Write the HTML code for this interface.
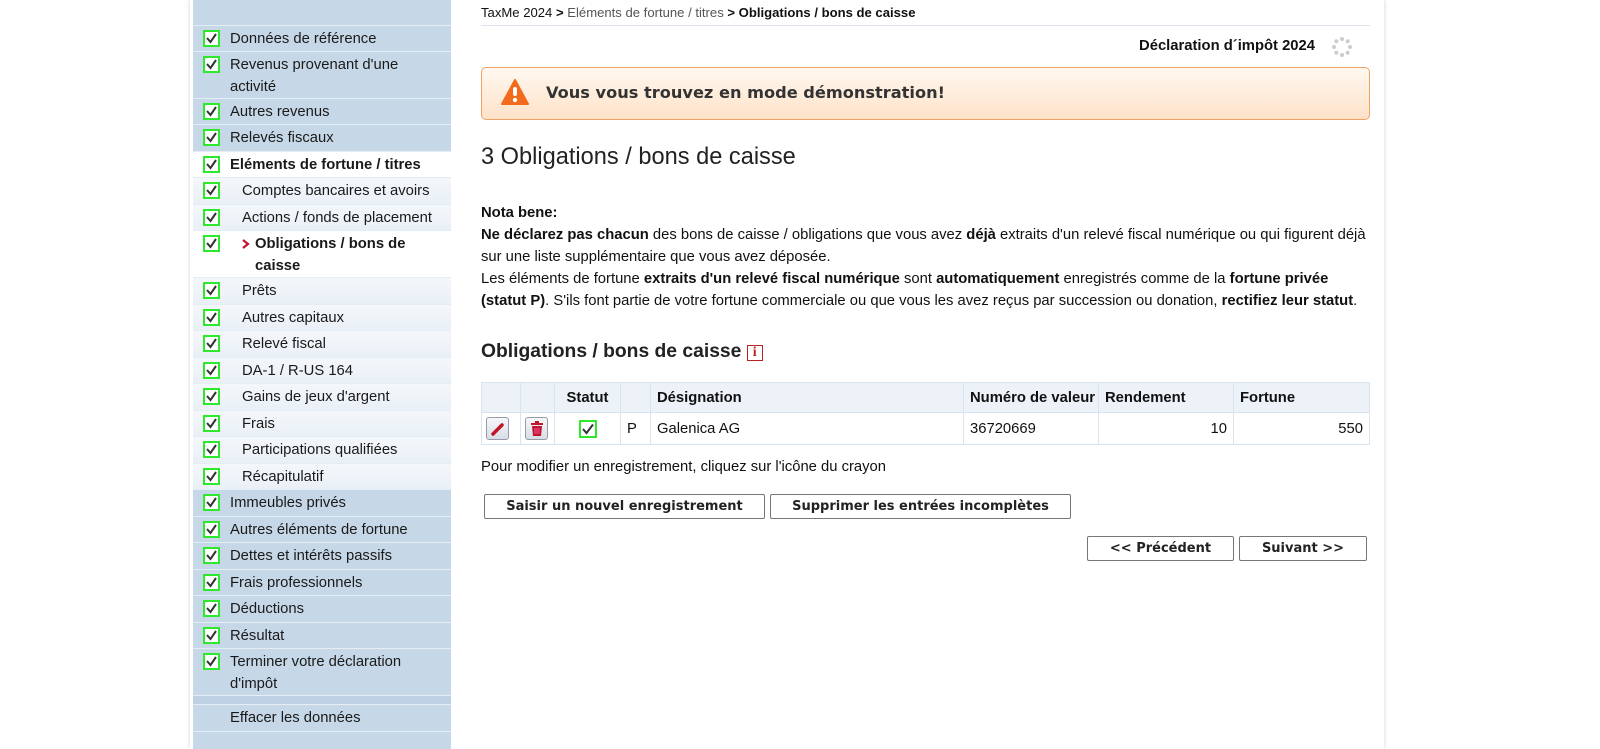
<!DOCTYPE html>
<html><head><meta charset="utf-8">
<style>
*{margin:0;padding:0;box-sizing:border-box}
body{width:1600px;height:749px;overflow:hidden;background:#fff;font-family:"Liberation Sans",Arial,sans-serif;font-size:14.8px;color:#111;position:relative}
.frame{position:absolute;left:190px;top:0;width:1194px;height:749px;box-shadow:0 0 4px rgba(0,0,0,.18);background:#fff}
.sb{position:absolute;left:193px;top:0;width:258px;height:749px;background:#c6d8e8}
.r{position:absolute;left:193px;width:258px;border-bottom:1px solid #e4edf5;background:#c6d8e8;line-height:22px;font-size:14.8px;color:#1a1a1a}
.r.l{background:linear-gradient(#f4f7fa,#e9f0f6)}
.r.w{background:#fff}
.r .t{position:absolute;left:37px;top:2px;width:215px}
.r.s .t{left:49px;width:200px}
.r .cb{position:absolute;left:10px;top:4px;width:17px;height:17px;border:2px solid #2ee82e;background:#fff}
.cb svg{position:absolute;left:1px;top:1px}
.bc{position:absolute;left:481px;top:5px;width:889px;height:21px;border-bottom:1px solid #dde3ea;font-size:13.1px}
.btn{position:absolute;height:25px;border:1px solid #777;border-radius:2px;background:#fff;font-family:"DejaVu Sans",Verdana,sans-serif;font-weight:bold;font-size:13px;text-align:center;line-height:23px;color:#222}
table{position:absolute;left:481px;top:382px;width:889px;border-collapse:collapse;table-layout:fixed}
td,th{border:1px solid #dae4ee;font-size:14.8px;padding:0 6px;height:32px;text-align:left;white-space:nowrap;overflow:hidden}
th{background:#edf2f8;font-weight:bold;height:30px}
</style></head><body>
<div class="frame"></div>
<div class="sb"></div>
<div class="r" style="top:0;height:26px"></div>

<div class="r" style="top:26px;height:26px"><span class="cb"><svg width="11" height="11"><path d="M1 5l3.5 4L10 1" stroke="#333" stroke-width="2" fill="none"/></svg></span><span class="t">Données de référence</span></div>
<div class="r" style="top:52px;height:47px"><span class="cb"><svg width="11" height="11"><path d="M1 5l3.5 4L10 1" stroke="#333" stroke-width="2" fill="none"/></svg></span><span class="t">Revenus provenant d'une activité</span></div>
<div class="r" style="top:99px;height:26px"><span class="cb"><svg width="11" height="11"><path d="M1 5l3.5 4L10 1" stroke="#333" stroke-width="2" fill="none"/></svg></span><span class="t">Autres revenus</span></div>
<div class="r" style="top:125px;height:27px"><span class="cb"><svg width="11" height="11"><path d="M1 5l3.5 4L10 1" stroke="#333" stroke-width="2" fill="none"/></svg></span><span class="t">Relevés fiscaux</span></div>
<div class="r w" style="top:152px;height:26px"><span class="cb"><svg width="11" height="11"><path d="M1 5l3.5 4L10 1" stroke="#333" stroke-width="2" fill="none"/></svg></span><span class="t"><b>Eléments de fortune / titres</b></span></div>
<div class="r l s" style="top:178px;height:27px"><span class="cb"><svg width="11" height="11"><path d="M1 5l3.5 4L10 1" stroke="#333" stroke-width="2" fill="none"/></svg></span><span class="t">Comptes bancaires et avoirs</span></div>
<div class="r l s" style="top:205px;height:26px"><span class="cb"><svg width="11" height="11"><path d="M1 5l3.5 4L10 1" stroke="#333" stroke-width="2" fill="none"/></svg></span><span class="t">Actions / fonds de placement</span></div>
<div class="r w s" style="top:231px;height:47px"><span class="cb"><svg width="11" height="11"><path d="M1 5l3.5 4L10 1" stroke="#333" stroke-width="2" fill="none"/></svg></span><span class="t" style="padding-left:13px;width:190px"><svg style="position:absolute;left:0;top:6px" width="8" height="10"><path d="M1 1l5 4-5 4" stroke="#c8102e" stroke-width="2.2" fill="none"/></svg><b>Obligations / bons de caisse</b></span></div>
<div class="r l s" style="top:278px;height:27px"><span class="cb"><svg width="11" height="11"><path d="M1 5l3.5 4L10 1" stroke="#333" stroke-width="2" fill="none"/></svg></span><span class="t">Prêts</span></div>
<div class="r l s" style="top:305px;height:26px"><span class="cb"><svg width="11" height="11"><path d="M1 5l3.5 4L10 1" stroke="#333" stroke-width="2" fill="none"/></svg></span><span class="t">Autres capitaux</span></div>
<div class="r l s" style="top:331px;height:27px"><span class="cb"><svg width="11" height="11"><path d="M1 5l3.5 4L10 1" stroke="#333" stroke-width="2" fill="none"/></svg></span><span class="t">Relevé fiscal</span></div>
<div class="r l s" style="top:358px;height:26px"><span class="cb"><svg width="11" height="11"><path d="M1 5l3.5 4L10 1" stroke="#333" stroke-width="2" fill="none"/></svg></span><span class="t">DA-1 / R-US 164</span></div>
<div class="r l s" style="top:384px;height:27px"><span class="cb"><svg width="11" height="11"><path d="M1 5l3.5 4L10 1" stroke="#333" stroke-width="2" fill="none"/></svg></span><span class="t">Gains de jeux d'argent</span></div>
<div class="r l s" style="top:411px;height:26px"><span class="cb"><svg width="11" height="11"><path d="M1 5l3.5 4L10 1" stroke="#333" stroke-width="2" fill="none"/></svg></span><span class="t">Frais</span></div>
<div class="r l s" style="top:437px;height:27px"><span class="cb"><svg width="11" height="11"><path d="M1 5l3.5 4L10 1" stroke="#333" stroke-width="2" fill="none"/></svg></span><span class="t">Participations qualifiées</span></div>
<div class="r l s" style="top:464px;height:26px"><span class="cb"><svg width="11" height="11"><path d="M1 5l3.5 4L10 1" stroke="#333" stroke-width="2" fill="none"/></svg></span><span class="t">Récapitulatif</span></div>
<div class="r" style="top:490px;height:27px"><span class="cb"><svg width="11" height="11"><path d="M1 5l3.5 4L10 1" stroke="#333" stroke-width="2" fill="none"/></svg></span><span class="t">Immeubles privés</span></div>
<div class="r" style="top:517px;height:26px"><span class="cb"><svg width="11" height="11"><path d="M1 5l3.5 4L10 1" stroke="#333" stroke-width="2" fill="none"/></svg></span><span class="t">Autres éléments de fortune</span></div>
<div class="r" style="top:543px;height:27px"><span class="cb"><svg width="11" height="11"><path d="M1 5l3.5 4L10 1" stroke="#333" stroke-width="2" fill="none"/></svg></span><span class="t">Dettes et intérêts passifs</span></div>
<div class="r" style="top:570px;height:26px"><span class="cb"><svg width="11" height="11"><path d="M1 5l3.5 4L10 1" stroke="#333" stroke-width="2" fill="none"/></svg></span><span class="t">Frais professionnels</span></div>
<div class="r" style="top:596px;height:27px"><span class="cb"><svg width="11" height="11"><path d="M1 5l3.5 4L10 1" stroke="#333" stroke-width="2" fill="none"/></svg></span><span class="t">Déductions</span></div>
<div class="r" style="top:623px;height:26px"><span class="cb"><svg width="11" height="11"><path d="M1 5l3.5 4L10 1" stroke="#333" stroke-width="2" fill="none"/></svg></span><span class="t">Résultat</span></div>
<div class="r" style="top:649px;height:47px"><span class="cb"><svg width="11" height="11"><path d="M1 5l3.5 4L10 1" stroke="#333" stroke-width="2" fill="none"/></svg></span><span class="t">Terminer votre déclaration d'impôt</span></div>
<div class="r" style="top:696px;height:9px;background:#bdd1e3"></div>
<div class="r" style="top:705px;height:27px"><span class="t">Effacer les données</span></div>

<div class="bc">TaxMe 2024 <b>&gt;</b> <span style="color:#555">Eléments de fortune / titres</span> <b>&gt; Obligations / bons de caisse</b></div>
<div style="position:absolute;right:285px;top:38px;font-weight:bold;font-size:14.8px">Déclaration d´impôt 2024</div>
<svg style="position:absolute;left:1331px;top:36px" width="22" height="22" viewBox="0 0 22 22"><g fill="#ccc"><circle cx="11" cy="3" r="2"/><circle cx="16.7" cy="5.3" r="2"/><circle cx="19" cy="11" r="2"/><circle cx="16.7" cy="16.7" r="2"/><circle cx="11" cy="19" r="2"/><circle cx="5.3" cy="16.7" r="2"/><circle cx="3" cy="11" r="2"/><circle cx="5.3" cy="5.3" r="2"/></g></svg>

<div style="position:absolute;left:481px;top:67px;width:889px;height:53px;border:1px solid #f0a264;border-radius:5px;background:linear-gradient(#fff8f0,#fde2c8)">
<svg style="position:absolute;left:19px;top:11px" width="28" height="27" viewBox="0 0 28 27"><path d="M14 1L27 25H1Z" fill="#f26a1b" stroke="#f26a1b" stroke-width="2" stroke-linejoin="round"/><rect x="12" y="8" width="4" height="9" rx="2" fill="#fff"/><circle cx="14" cy="21" r="2.2" fill="#fff"/></svg>
<div style="position:absolute;left:64px;top:15px;font-family:'DejaVu Sans',Verdana,sans-serif;font-weight:bold;font-size:16.2px;color:#333">Vous vous trouvez en mode démonstration!</div>
</div>

<div style="position:absolute;left:481px;top:144px;font-size:23.6px;color:#222">3 Obligations / bons de caisse</div>

<div style="position:absolute;left:481px;top:202px;width:890px;line-height:22px;font-size:14.8px">
<b>Nota bene:</b><br>
<b>Ne déclarez pas chacun</b> des bons de caisse / obligations que vous avez <b>déjà</b> extraits d'un relevé fiscal numérique ou qui figurent déjà sur une liste supplémentaire que vous avez déposée.<br>
Les éléments de fortune <b>extraits d'un relevé fiscal numérique</b> sont <b>automatiquement</b> enregistrés comme de la <b>fortune privée (statut P)</b>. S'ils font partie de votre fortune commerciale ou que vous les avez reçus par succession ou donation, <b>rectifiez leur statut</b>.
</div>

<div style="position:absolute;left:481px;top:341px;font-size:19.3px;font-weight:bold;color:#222">Obligations / bons de caisse <span style="display:inline-block;width:16px;height:16px;border:1.5px solid #b22;color:#b22;font-family:'Liberation Serif',serif;font-size:14px;line-height:13px;text-align:center;vertical-align:1px">i</span></div>

<table>
<colgroup><col style="width:39px"><col style="width:34px"><col style="width:66px"><col style="width:30px"><col style="width:313px"><col style="width:135px"><col style="width:135px"><col></colgroup>
<tr><th></th><th></th><th style="text-align:center">Statut</th><th></th><th>Désignation</th><th>Numéro de valeur</th><th>Rendement</th><th>Fortune</th></tr>
<tr><td style="padding:0 4px"><span style="display:inline-block;width:23px;height:23px;border:1px solid #99a;border-radius:3px;background:linear-gradient(#f6f8fa,#d8dee6);vertical-align:middle;position:relative"><svg style="position:absolute;left:4px;top:4px" width="14" height="14"><path d="M2 12L11 3" stroke="#c0142a" stroke-width="3.5" stroke-linecap="round"/></svg></span></td>
<td style="padding:0 4px"><span style="display:inline-block;width:23px;height:23px;border:1px solid #99a;border-radius:3px;background:linear-gradient(#f6f8fa,#d8dee6);vertical-align:middle;position:relative"><svg style="position:absolute;left:4px;top:3px" width="14" height="16"><rect x="1" y="2" width="12" height="2" fill="#c0142a"/><rect x="5" y="0" width="4" height="2" fill="#c0142a"/><path d="M2 5h10l-1 10H3Z" fill="#c0142a"/><path d="M5 7v6M7 7v6M9 7v6" stroke="#f6b" stroke-width=".8"/></svg></span></td>
<td style="text-align:center"><span style="display:inline-block;width:18px;height:18px;border:2px solid #2ee82e;vertical-align:middle;position:relative"><svg style="position:absolute;left:1px;top:1px" width="12" height="12"><path d="M1 6l3.5 4L11 1.5" stroke="#333" stroke-width="2" fill="none"/></svg></span></td>
<td>P</td><td>Galenica AG</td><td>36720669</td><td style="text-align:right">10</td><td style="text-align:right">550</td></tr>
</table>

<div style="position:absolute;left:481px;top:459px">Pour modifier un enregistrement, cliquez sur l'icône du crayon</div>
<div class="btn" style="left:484px;top:494px;width:281px">Saisir un nouvel enregistrement</div>
<div class="btn" style="left:770px;top:494px;width:301px">Supprimer les entrées incomplètes</div>
<div class="btn" style="left:1087px;top:536px;width:147px">&lt;&lt; Précédent</div>
<div class="btn" style="left:1239px;top:536px;width:128px">Suivant &gt;&gt;</div>
</body></html>
